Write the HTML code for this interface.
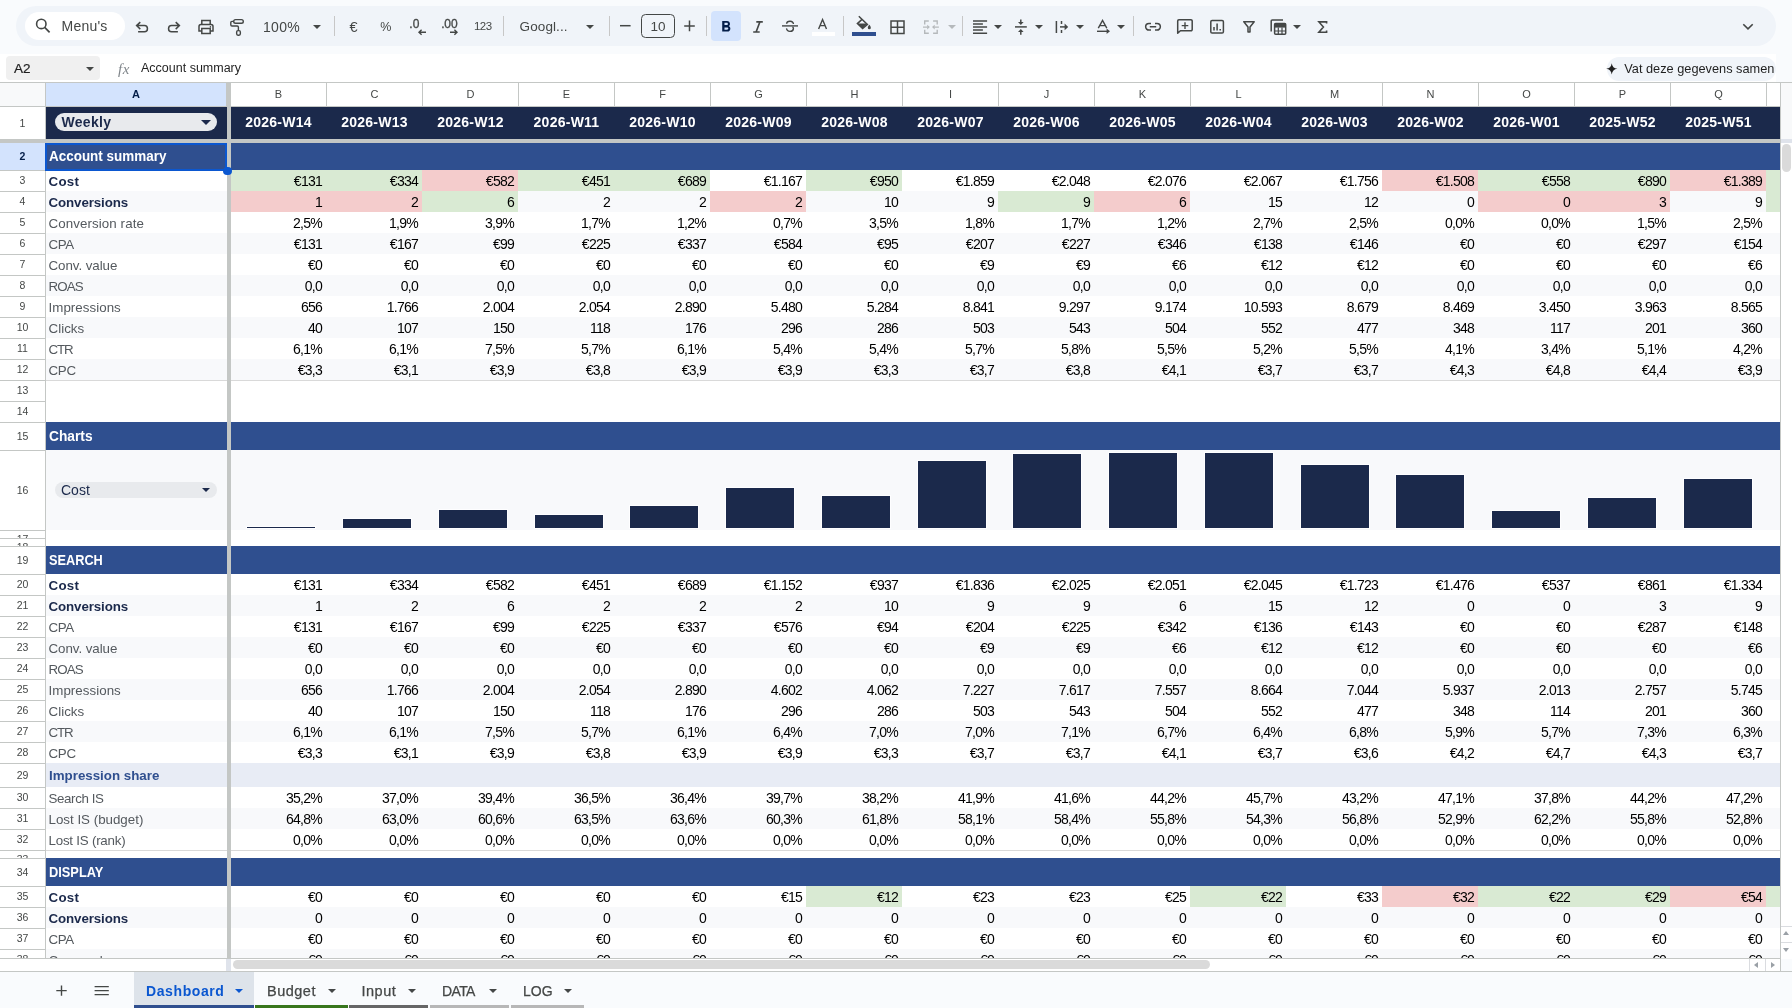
<!DOCTYPE html>
<html lang="nl"><head><meta charset="utf-8"><title>Dashboard</title>
<style>html,body{margin:0;padding:0;}
body{width:1792px;height:1008px;overflow:hidden;background:#f9fbfd;font-family:"Liberation Sans",sans-serif;}
#app{will-change:transform;position:relative;width:1792px;height:1008px;overflow:hidden;background:#f9fbfd;}
#app div{position:absolute;box-sizing:border-box;}
#app svg{position:absolute;overflow:visible;}
#grid{left:0;top:0;width:1792px;height:1008px;}
.t{white-space:nowrap;overflow:visible;font-size:13.33px;color:#000;}
.ch{text-align:center;font-size:11px;color:#444746;}
.chs{font-weight:bold;color:#041e49;}
.rh{overflow:hidden;}
.rh span{position:absolute;left:0;width:45px;height:16px;line-height:16px;text-align:center;font-size:10.5px;color:#444746;}
.rhs span{font-weight:bold;color:#041e49;}
.wk{font-weight:bold;font-size:14px;color:#1b294b;letter-spacing:0.3px;}
.wkh{text-align:center;font-weight:bold;color:#fff;font-size:14px;letter-spacing:0.25px;}
.sec{font-weight:bold;color:#fff;font-size:14.4px;}
.lb{color:#54595e;font-size:13.33px;}
.lb.b{font-weight:bold;color:#1b294b;}
.is{font-weight:bold;color:#2f4f8f;font-size:13.33px;}
.v{text-align:right;color:#000;font-size:14px;letter-spacing:-0.75px;}
.cst{color:#1b294b;font-size:14px;}
.dd{width:0;height:0;border-left:5px solid transparent;border-right:5px solid transparent;border-top:5px solid #444746;}
.sep{width:1px;height:20px;top:16px;background:#c7c7c7;}
.tb{font-size:14px;color:#444746;white-space:nowrap;line-height:20px;height:20px;}
.tab{font-size:14px;color:#444746;white-space:nowrap;line-height:20px;height:20px;font-weight:bold;letter-spacing:0.4px;}
</style></head><body>
<div id="app">
<div style="left:16px;top:6px;width:1760px;height:40px;border-radius:20px;background:#f0f4f9"></div>
<div style="left:25px;top:12px;width:100px;height:28px;border-radius:14px;background:#fff"></div>
<div class="tb" style="left:61.5px;top:16px;font-size:14px;letter-spacing:0.22px;">Menu&#x27;s</div>
<div class="tb" style="left:263px;top:16.5px;font-size:14px;letter-spacing:0.3px;">100%</div>
<div class="sep" style="left:334px"></div>
<div class="tb" style="left:349.6px;top:16.5px;font-size:14.5px;">€</div>
<div class="tb" style="left:380.3px;top:16.5px;font-size:12.5px;">%</div>
<div class="tb" style="left:474px;top:15.5px;font-size:11.5px;letter-spacing:-0.55px;">123</div>
<div class="sep" style="left:503px"></div>
<div class="tb" style="left:519.6px;top:16.5px;font-size:13.5px;letter-spacing:0.1px;">Googl...</div>
<div class="sep" style="left:609px"></div>
<div style="left:641px;top:14px;width:34px;height:24px;border:1px solid #444746;border-radius:4.5px;"></div>
<div class="tb" style="left:641px;top:16.5px;width:34px;text-align:center;font-size:13.5px;">10</div>
<div class="sep" style="left:706px"></div>
<div style="left:711px;top:11px;width:30px;height:30px;border-radius:4px;background:#d3e3fd"></div>
<div style="left:811.5px;top:32px;width:23px;height:3.7px;background:#fff"></div>
<div class="sep" style="left:843px"></div>
<div style="left:852.3px;top:32px;width:23.3px;height:3.7px;background:#2f4f8f"></div>
<div class="sep" style="left:962px"></div>
<div class="sep" style="left:1133px"></div>
<svg style="left:0;top:0" width="1792" height="50" viewBox="0 0 1792 50"><circle cx="41.3" cy="23.9" r="4.7" fill="none" stroke="#444746" stroke-width="1.6"/><path d="M44.7 27.4 L49.6 32.4" fill="none" stroke="#444746" stroke-width="1.7" /><path d="M140.3 22.1 L136.6 25.6 L140.3 29.1 M137 25.6 H144.4 a3.05 3.05 0 0 1 0 6.1 H138.1" fill="none" stroke="#444746" stroke-width="1.5" /><path d="M175.7 22.1 L179.4 25.6 L175.7 29.1 M179 25.6 H171.6 a3.05 3.05 0 0 0 0 6.1 H177.9" fill="none" stroke="#444746" stroke-width="1.5" /><path d="M201.8 24.4 V20.5 H210.2 V24.4" fill="none" stroke="#444746" stroke-width="1.5" /><path d="M201.8 31 H199 V26.5 a2 2 0 0 1 2 -2 H211 a2 2 0 0 1 2 2 V31 H210.2" fill="none" stroke="#444746" stroke-width="1.5" /><path d="M201.8 28.6 H210.2 V33.4 H201.8 Z" fill="none" stroke="#444746" stroke-width="1.5" /><circle cx="210.4" cy="26.9" r="0.8" fill="#444746"/><rect x="233.7" y="19.6" width="9.6" height="3.6" rx="1.8" fill="none" stroke="#444746" stroke-width="1.4"/><path d="M233.7 21.4 H232 a1.2 1.2 0 0 0 -1.2 1.2 V24.8 a1.2 1.2 0 0 0 1.2 1.2 H237.2 a1.2 1.2 0 0 1 1.2 1.2 V30.4" fill="none" stroke="#444746" stroke-width="1.4" /><rect x="236.65" y="30.6" width="3.7" height="4.6" rx="1.35" fill="none" stroke="#444746" stroke-width="1.4"/><path d="M313.0 24.9 h8 l-4.0 4 z" fill="#444746" /><text x="409.3" y="28.1" font-family="Liberation Sans, sans-serif" font-size="12" fill="#444746" stroke="#444746" stroke-width="0.3">.0</text><path d="M426 32.2 H419 M421.6 29.7 L419 32.2 L421.6 34.7" fill="none" stroke="#444746" stroke-width="1.4" /><text x="441.2" y="28.1" font-family="Liberation Sans, sans-serif" font-size="12" fill="#444746" stroke="#444746" stroke-width="0.3" letter-spacing="-0.15">.00</text><path d="M450 32.2 H457 M454.4 29.7 L457 32.2 L454.4 34.7" fill="none" stroke="#444746" stroke-width="1.4" /><path d="M586.0 24.9 h8 l-4.0 4 z" fill="#444746" /><path d="M620 25.7 H630.6" fill="none" stroke="#444746" stroke-width="1.5" /><path d="M684.2 25.9 H694.8 M689.5 20.6 V31.2" fill="none" stroke="#444746" stroke-width="1.5" /><path d="M15.6 10.79c.97-.67 1.65-1.77 1.65-2.79 0-2.26-1.75-4-4-4H7v14h7.04c2.09 0 3.71-1.7 3.71-3.79 0-1.52-.86-2.82-2.15-3.42zM10 6.5h3c.83 0 1.5.67 1.5 1.5s-.67 1.5-1.5 1.5h-3v-3zm3.5 9H10v-3h3.5c.83 0 1.5.67 1.5 1.5s-.67 1.5-1.5 1.5z" fill="#041e49" transform="translate(716.9,17.9) scale(0.7583333333333333) "/><path d="M756.3 21.9 H762.8 M753.2 32 H759.7 M759.9 21.9 L756.1 32" fill="none" stroke="#444746" stroke-width="1.6" /><path d="M782 25.9 H798" fill="none" stroke="#444746" stroke-width="1.4" /><path d="M793.4 24 a3.4 2.6 0 0 0 -6.8 -0.3" fill="none" stroke="#444746" stroke-width="1.4" /><path d="M786.6 28.4 a3.4 2.9 0 0 0 6.8 0.2 c0 -0.9 -0.4 -1.4 -0.9 -1.8" fill="none" stroke="#444746" stroke-width="1.4" /><path d="M818.6 29 L822.55 19.6 L826.5 29 M820 25.6 H825.1" fill="none" stroke="#444746" stroke-width="1.4" /><path d="M858.8 16.2 L867.4 24.4 L862.6 28.6 L857.4 23.6 L862 19.4" fill="none" stroke="#444746" stroke-width="1.5" /><path d="M857.6 23.4 H867.2 L862.6 28.4 Z" fill="#444746" /><path d="M869.3 24.8 c0.9 1.2 1.5 2.1 1.5 2.9 a1.5 1.5 0 0 1 -3 0 c0 -0.8 0.6 -1.7 1.5 -2.9z" fill="#444746" /><path d="M891 21 H904 V33.4 H891 Z M897.5 21 V33.4 M891 27.2 H904" fill="none" stroke="#444746" stroke-width="1.5" /><path d="M928.8 21 H924.7 V24.5 M933.1 21 H937.2 V24.5 M928.8 33.2 H924.7 V29.7 M933.1 33.2 H937.2 V29.7" fill="none" stroke="#b5b9bc" stroke-width="1.4" /><path d="M923 27.1 H927.5 M938.9 27.1 H934.4" fill="none" stroke="#b5b9bc" stroke-width="1.4" /><path d="M927.2 24.7 L929.9 27.1 L927.2 29.5 Z" fill="#b5b9bc" /><path d="M934.7 24.7 L932 27.1 L934.7 29.5 Z" fill="#b5b9bc" /><path d="M948.0 24.9 h8 l-4.0 4 z" fill="#b5b9bc" /><path d="M973 20.9 H987.1 M973 23.95 H982.9 M973 27.05 H987.1 M973 30.1 H982.9 M973 33.2 H987.1" fill="none" stroke="#444746" stroke-width="1.5" /><path d="M994.0 24.9 h8 l-4.0 4 z" fill="#444746" /><path d="M1015 26.9 H1026.8" fill="none" stroke="#444746" stroke-width="1.5" /><path d="M1020.8 19.6 V23" fill="none" stroke="#444746" stroke-width="1.5" /><path d="M1018 22 H1023.6 L1020.8 25 Z" fill="#444746" /><path d="M1020.8 34.8 V31" fill="none" stroke="#444746" stroke-width="1.5" /><path d="M1018 32 H1023.6 L1020.8 29 Z" fill="#444746" /><path d="M1035.0 24.9 h8 l-4.0 4 z" fill="#444746" /><path d="M1056.4 21 V33" fill="none" stroke="#444746" stroke-width="1.5" /><path d="M1060 26.9 H1066" fill="none" stroke="#444746" stroke-width="1.5" /><path d="M1064.6 23.6 L1068.2 26.9 L1064.6 30.2 Z" fill="#444746" /><path d="M1061.5 21 V24 M1061.5 30 V33" fill="none" stroke="#444746" stroke-width="1.5" /><path d="M1076.0 24.9 h8 l-4.0 4 z" fill="#444746" /><path d="M1098.3 28.2 L1102.55 20.4 L1106.8 28.2 M1099.8 25.6 H1105.3" fill="none" stroke="#444746" stroke-width="1.4" /><path d="M1097 31.3 H1108" fill="none" stroke="#444746" stroke-width="1.4" /><path d="M1106.6 28.6 L1110 31.3 L1106.6 34 Z" fill="#444746" /><path d="M1117.0 24.9 h8 l-4.0 4 z" fill="#444746" /><path d="M1151 23.4 H1149 a3.35 3.35 0 0 0 0 6.7 H1151 M1155 23.4 H1157 a3.35 3.35 0 0 1 0 6.7 H1155 M1149.8 26.75 H1156.2" fill="none" stroke="#444746" stroke-width="1.5" /><path d="M1177.7 33.2 V21 a1.2 1.2 0 0 1 1.2 -1.2 H1191 a1.2 1.2 0 0 1 1.2 1.2 V29.5 a1.2 1.2 0 0 1 -1.2 1.2 H1180.4 Z" fill="none" stroke="#444746" stroke-width="1.5" stroke-linejoin="round"/><path d="M1185 22.3 V28.9 M1181.7 25.6 H1188.3" fill="none" stroke="#444746" stroke-width="1.4" /><rect x="1210.8" y="20.4" width="12.6" height="12.6" rx="1.3" fill="none" stroke="#444746" stroke-width="1.5"/><path d="M1214 27 V30.6 M1217.1 23.4 V30.6 M1220.2 29 V30.6" fill="none" stroke="#444746" stroke-width="1.5" /><path d="M1243.8 21.7 H1254.2 L1250 27 V32 H1248 V27 Z" fill="none" stroke="#444746" stroke-width="1.5" stroke-linejoin="round"/><path d="M1283 19.9 H1272.3 a1.1 1.1 0 0 0 -1.1 1.1 V31.4" fill="none" stroke="#444746" stroke-width="1.5" /><rect x="1274.6" y="23.4" width="11.1" height="10.9" rx="1" fill="none" stroke="#444746" stroke-width="1.5"/><path d="M1274.6 23.4 H1285.7 V27.6 H1274.6 Z" fill="#444746" /><path d="M1278.3 27.6 V34.3 M1282 27.6 V34.3 M1274.6 31 H1285.7" fill="none" stroke="#444746" stroke-width="1.2" /><path d="M1293.0 24.9 h8 l-4.0 4 z" fill="#444746" /><path d="M1326.6 23.6 V21.9 H1318.9 L1323.4 27.1 L1318.9 32.2 H1326.6 V30.5" fill="none" stroke="#444746" stroke-width="1.6" stroke-linejoin="miter"/><path d="M1743.3 24.2 L1748 28.9 L1752.7 24.2" fill="none" stroke="#444746" stroke-width="1.6" /></svg>
<div style="left:0;top:54px;width:1776px;height:28px;background:#fff"></div>
<div style="left:6px;top:56px;width:94px;height:24px;border-radius:4px;background:#f0f0f0"></div>
<div class="tb" style="left:14px;top:58.5px;font-size:13.5px;color:#1f1f1f;-webkit-text-stroke:0.2px #1f1f1f;">A2</div>
<div class="dd" style="left:85.5px;top:66.5px;border-left-width:4.5px;border-right-width:4.5px;border-top-width:4.5px;border-top-color:#444746"></div>
<div class="tb" style="left:118px;top:59px;font-size:15px;font-style:italic;color:#80868b;font-family:'Liberation Serif',serif;letter-spacing:0.6px;">fx</div>
<div class="tb" style="left:141px;top:58px;font-size:12.5px;color:#1f1f1f;">Account summary</div>
<div style="left:1607px;top:56.5px;width:169px;height:24px;border-radius:12px;background:#f0f4f9"></div>
<svg style="left:1605.45px;top:61.55px" width="13.5" height="13.5" viewBox="0 0 24 24" fill="#1f1f1f"><path d="M12 2 C12.8 8 16 11.2 22 12 C16 12.8 12.8 16 12 22 C11.2 16 8 12.8 2 12 C8 11.2 11.2 8 12 2z"/></svg>
<div class="tb" style="left:1624.3px;top:58.5px;font-size:12.75px;color:#1f1f1f;">Vat deze gegevens samen</div>
<div id="grid">
<div style="left:0px;top:82px;width:1781px;height:1px;background:#c4c7c5;"></div>
<div style="left:0px;top:83px;width:45px;height:23px;background:#f8f9fa;"></div>
<div style="left:45px;top:83px;width:1px;height:24px;background:#c4c7c5;"></div>
<div style="left:0px;top:106px;width:1780px;height:1px;background:#c4c7c5;"></div>
<div style="left:46px;top:83px;width:180px;height:23px;background:#d3e3fd;"></div>
<div class="t ch chs" style="left:46px;top:83px;width:180px;height:23px;line-height:23px;">A</div>
<div style="left:226px;top:83px;width:1px;height:23px;background:#c4c7c5;"></div>
<div style="left:231px;top:83px;width:95px;height:23px;background:#fff;"></div>
<div class="t ch" style="left:231px;top:83px;width:95px;height:23px;line-height:23px;">B</div>
<div style="left:326px;top:83px;width:1px;height:23px;background:#c4c7c5;"></div>
<div style="left:327px;top:83px;width:95px;height:23px;background:#fff;"></div>
<div class="t ch" style="left:327px;top:83px;width:95px;height:23px;line-height:23px;">C</div>
<div style="left:422px;top:83px;width:1px;height:23px;background:#c4c7c5;"></div>
<div style="left:423px;top:83px;width:95px;height:23px;background:#fff;"></div>
<div class="t ch" style="left:423px;top:83px;width:95px;height:23px;line-height:23px;">D</div>
<div style="left:518px;top:83px;width:1px;height:23px;background:#c4c7c5;"></div>
<div style="left:519px;top:83px;width:95px;height:23px;background:#fff;"></div>
<div class="t ch" style="left:519px;top:83px;width:95px;height:23px;line-height:23px;">E</div>
<div style="left:614px;top:83px;width:1px;height:23px;background:#c4c7c5;"></div>
<div style="left:615px;top:83px;width:95px;height:23px;background:#fff;"></div>
<div class="t ch" style="left:615px;top:83px;width:95px;height:23px;line-height:23px;">F</div>
<div style="left:710px;top:83px;width:1px;height:23px;background:#c4c7c5;"></div>
<div style="left:711px;top:83px;width:95px;height:23px;background:#fff;"></div>
<div class="t ch" style="left:711px;top:83px;width:95px;height:23px;line-height:23px;">G</div>
<div style="left:806px;top:83px;width:1px;height:23px;background:#c4c7c5;"></div>
<div style="left:807px;top:83px;width:95px;height:23px;background:#fff;"></div>
<div class="t ch" style="left:807px;top:83px;width:95px;height:23px;line-height:23px;">H</div>
<div style="left:902px;top:83px;width:1px;height:23px;background:#c4c7c5;"></div>
<div style="left:903px;top:83px;width:95px;height:23px;background:#fff;"></div>
<div class="t ch" style="left:903px;top:83px;width:95px;height:23px;line-height:23px;">I</div>
<div style="left:998px;top:83px;width:1px;height:23px;background:#c4c7c5;"></div>
<div style="left:999px;top:83px;width:95px;height:23px;background:#fff;"></div>
<div class="t ch" style="left:999px;top:83px;width:95px;height:23px;line-height:23px;">J</div>
<div style="left:1094px;top:83px;width:1px;height:23px;background:#c4c7c5;"></div>
<div style="left:1095px;top:83px;width:95px;height:23px;background:#fff;"></div>
<div class="t ch" style="left:1095px;top:83px;width:95px;height:23px;line-height:23px;">K</div>
<div style="left:1190px;top:83px;width:1px;height:23px;background:#c4c7c5;"></div>
<div style="left:1191px;top:83px;width:95px;height:23px;background:#fff;"></div>
<div class="t ch" style="left:1191px;top:83px;width:95px;height:23px;line-height:23px;">L</div>
<div style="left:1286px;top:83px;width:1px;height:23px;background:#c4c7c5;"></div>
<div style="left:1287px;top:83px;width:95px;height:23px;background:#fff;"></div>
<div class="t ch" style="left:1287px;top:83px;width:95px;height:23px;line-height:23px;">M</div>
<div style="left:1382px;top:83px;width:1px;height:23px;background:#c4c7c5;"></div>
<div style="left:1383px;top:83px;width:95px;height:23px;background:#fff;"></div>
<div class="t ch" style="left:1383px;top:83px;width:95px;height:23px;line-height:23px;">N</div>
<div style="left:1478px;top:83px;width:1px;height:23px;background:#c4c7c5;"></div>
<div style="left:1479px;top:83px;width:95px;height:23px;background:#fff;"></div>
<div class="t ch" style="left:1479px;top:83px;width:95px;height:23px;line-height:23px;">O</div>
<div style="left:1574px;top:83px;width:1px;height:23px;background:#c4c7c5;"></div>
<div style="left:1575px;top:83px;width:95px;height:23px;background:#fff;"></div>
<div class="t ch" style="left:1575px;top:83px;width:95px;height:23px;line-height:23px;">P</div>
<div style="left:1670px;top:83px;width:1px;height:23px;background:#c4c7c5;"></div>
<div style="left:1671px;top:83px;width:95px;height:23px;background:#fff;"></div>
<div class="t ch" style="left:1671px;top:83px;width:95px;height:23px;line-height:23px;">Q</div>
<div style="left:1766px;top:83px;width:1px;height:23px;background:#c4c7c5;"></div>
<div style="left:1767px;top:83px;width:13px;height:23px;background:#fff;"></div>
<div style="left:0px;top:107px;width:45px;height:32px;background:#fff;"></div>
<div class="rh" style="left:0;top:107px;width:45px;height:32px;"><span style="top:7.5px">1</span></div>
<div style="left:0px;top:143px;width:45px;height:27px;background:#d3e3fd;"></div>
<div class="rh rhs" style="left:0;top:143px;width:45px;height:27px;"><span style="top:5.0px">2</span></div>
<div style="left:0px;top:170px;width:45px;height:1px;background:#c4c7c5;"></div>
<div style="left:0px;top:171px;width:45px;height:20px;background:#fff;"></div>
<div class="rh" style="left:0;top:171px;width:45px;height:20px;"><span style="top:1px">3</span></div>
<div style="left:0px;top:191px;width:45px;height:1px;background:#c4c7c5;"></div>
<div style="left:0px;top:192px;width:45px;height:20px;background:#fff;"></div>
<div class="rh" style="left:0;top:192px;width:45px;height:20px;"><span style="top:1px">4</span></div>
<div style="left:0px;top:212px;width:45px;height:1px;background:#c4c7c5;"></div>
<div style="left:0px;top:213px;width:45px;height:20px;background:#fff;"></div>
<div class="rh" style="left:0;top:213px;width:45px;height:20px;"><span style="top:1px">5</span></div>
<div style="left:0px;top:233px;width:45px;height:1px;background:#c4c7c5;"></div>
<div style="left:0px;top:234px;width:45px;height:20px;background:#fff;"></div>
<div class="rh" style="left:0;top:234px;width:45px;height:20px;"><span style="top:1px">6</span></div>
<div style="left:0px;top:254px;width:45px;height:1px;background:#c4c7c5;"></div>
<div style="left:0px;top:255px;width:45px;height:20px;background:#fff;"></div>
<div class="rh" style="left:0;top:255px;width:45px;height:20px;"><span style="top:1px">7</span></div>
<div style="left:0px;top:275px;width:45px;height:1px;background:#c4c7c5;"></div>
<div style="left:0px;top:276px;width:45px;height:20px;background:#fff;"></div>
<div class="rh" style="left:0;top:276px;width:45px;height:20px;"><span style="top:1px">8</span></div>
<div style="left:0px;top:296px;width:45px;height:1px;background:#c4c7c5;"></div>
<div style="left:0px;top:297px;width:45px;height:20px;background:#fff;"></div>
<div class="rh" style="left:0;top:297px;width:45px;height:20px;"><span style="top:1px">9</span></div>
<div style="left:0px;top:317px;width:45px;height:1px;background:#c4c7c5;"></div>
<div style="left:0px;top:318px;width:45px;height:20px;background:#fff;"></div>
<div class="rh" style="left:0;top:318px;width:45px;height:20px;"><span style="top:1px">10</span></div>
<div style="left:0px;top:338px;width:45px;height:1px;background:#c4c7c5;"></div>
<div style="left:0px;top:339px;width:45px;height:20px;background:#fff;"></div>
<div class="rh" style="left:0;top:339px;width:45px;height:20px;"><span style="top:1px">11</span></div>
<div style="left:0px;top:359px;width:45px;height:1px;background:#c4c7c5;"></div>
<div style="left:0px;top:360px;width:45px;height:20px;background:#fff;"></div>
<div class="rh" style="left:0;top:360px;width:45px;height:20px;"><span style="top:1px">12</span></div>
<div style="left:0px;top:380px;width:45px;height:1px;background:#c4c7c5;"></div>
<div style="left:0px;top:381px;width:45px;height:20px;background:#fff;"></div>
<div class="rh" style="left:0;top:381px;width:45px;height:20px;"><span style="top:1px">13</span></div>
<div style="left:0px;top:401px;width:45px;height:1px;background:#c4c7c5;"></div>
<div style="left:0px;top:402px;width:45px;height:20px;background:#fff;"></div>
<div class="rh" style="left:0;top:402px;width:45px;height:20px;"><span style="top:1px">14</span></div>
<div style="left:0px;top:422px;width:45px;height:1px;background:#c4c7c5;"></div>
<div style="left:0px;top:423px;width:45px;height:27px;background:#fff;"></div>
<div class="rh" style="left:0;top:423px;width:45px;height:27px;"><span style="top:5.0px">15</span></div>
<div style="left:0px;top:450px;width:45px;height:1px;background:#c4c7c5;"></div>
<div style="left:0px;top:451px;width:45px;height:79px;background:#fff;"></div>
<div class="rh" style="left:0;top:451px;width:45px;height:79px;"><span style="top:31.0px">16</span></div>
<div style="left:0px;top:530px;width:45px;height:1px;background:#c4c7c5;"></div>
<div style="left:0px;top:531px;width:45px;height:7px;background:#fff;"></div>
<div class="rh" style="left:0;top:531px;width:45px;height:7px;"><span style="top:-0.5px">17</span></div>
<div style="left:0px;top:538px;width:45px;height:1px;background:#c4c7c5;"></div>
<div style="left:0px;top:539px;width:45px;height:7px;background:#fff;"></div>
<div class="rh" style="left:0;top:539px;width:45px;height:7px;"><span style="top:-0.5px">18</span></div>
<div style="left:0px;top:546px;width:45px;height:1px;background:#c4c7c5;"></div>
<div style="left:0px;top:547px;width:45px;height:27px;background:#fff;"></div>
<div class="rh" style="left:0;top:547px;width:45px;height:27px;"><span style="top:5.0px">19</span></div>
<div style="left:0px;top:574px;width:45px;height:1px;background:#c4c7c5;"></div>
<div style="left:0px;top:575px;width:45px;height:20px;background:#fff;"></div>
<div class="rh" style="left:0;top:575px;width:45px;height:20px;"><span style="top:1px">20</span></div>
<div style="left:0px;top:595px;width:45px;height:1px;background:#c4c7c5;"></div>
<div style="left:0px;top:596px;width:45px;height:20px;background:#fff;"></div>
<div class="rh" style="left:0;top:596px;width:45px;height:20px;"><span style="top:1px">21</span></div>
<div style="left:0px;top:616px;width:45px;height:1px;background:#c4c7c5;"></div>
<div style="left:0px;top:617px;width:45px;height:20px;background:#fff;"></div>
<div class="rh" style="left:0;top:617px;width:45px;height:20px;"><span style="top:1px">22</span></div>
<div style="left:0px;top:637px;width:45px;height:1px;background:#c4c7c5;"></div>
<div style="left:0px;top:638px;width:45px;height:20px;background:#fff;"></div>
<div class="rh" style="left:0;top:638px;width:45px;height:20px;"><span style="top:1px">23</span></div>
<div style="left:0px;top:658px;width:45px;height:1px;background:#c4c7c5;"></div>
<div style="left:0px;top:659px;width:45px;height:20px;background:#fff;"></div>
<div class="rh" style="left:0;top:659px;width:45px;height:20px;"><span style="top:1px">24</span></div>
<div style="left:0px;top:679px;width:45px;height:1px;background:#c4c7c5;"></div>
<div style="left:0px;top:680px;width:45px;height:20px;background:#fff;"></div>
<div class="rh" style="left:0;top:680px;width:45px;height:20px;"><span style="top:1px">25</span></div>
<div style="left:0px;top:700px;width:45px;height:1px;background:#c4c7c5;"></div>
<div style="left:0px;top:701px;width:45px;height:20px;background:#fff;"></div>
<div class="rh" style="left:0;top:701px;width:45px;height:20px;"><span style="top:1px">26</span></div>
<div style="left:0px;top:721px;width:45px;height:1px;background:#c4c7c5;"></div>
<div style="left:0px;top:722px;width:45px;height:20px;background:#fff;"></div>
<div class="rh" style="left:0;top:722px;width:45px;height:20px;"><span style="top:1px">27</span></div>
<div style="left:0px;top:742px;width:45px;height:1px;background:#c4c7c5;"></div>
<div style="left:0px;top:743px;width:45px;height:20px;background:#fff;"></div>
<div class="rh" style="left:0;top:743px;width:45px;height:20px;"><span style="top:1px">28</span></div>
<div style="left:0px;top:763px;width:45px;height:1px;background:#c4c7c5;"></div>
<div style="left:0px;top:764px;width:45px;height:23px;background:#fff;"></div>
<div class="rh" style="left:0;top:764px;width:45px;height:23px;"><span style="top:3.0px">29</span></div>
<div style="left:0px;top:787px;width:45px;height:1px;background:#c4c7c5;"></div>
<div style="left:0px;top:788px;width:45px;height:20px;background:#fff;"></div>
<div class="rh" style="left:0;top:788px;width:45px;height:20px;"><span style="top:1px">30</span></div>
<div style="left:0px;top:808px;width:45px;height:1px;background:#c4c7c5;"></div>
<div style="left:0px;top:809px;width:45px;height:20px;background:#fff;"></div>
<div class="rh" style="left:0;top:809px;width:45px;height:20px;"><span style="top:1px">31</span></div>
<div style="left:0px;top:829px;width:45px;height:1px;background:#c4c7c5;"></div>
<div style="left:0px;top:830px;width:45px;height:20px;background:#fff;"></div>
<div class="rh" style="left:0;top:830px;width:45px;height:20px;"><span style="top:1px">32</span></div>
<div style="left:0px;top:850px;width:45px;height:1px;background:#c4c7c5;"></div>
<div style="left:0px;top:851px;width:45px;height:7px;background:#fff;"></div>
<div class="rh" style="left:0;top:851px;width:45px;height:7px;"><span style="top:-0.5px">33</span></div>
<div style="left:0px;top:858px;width:45px;height:1px;background:#c4c7c5;"></div>
<div style="left:0px;top:859px;width:45px;height:27px;background:#fff;"></div>
<div class="rh" style="left:0;top:859px;width:45px;height:27px;"><span style="top:5.0px">34</span></div>
<div style="left:0px;top:886px;width:45px;height:1px;background:#c4c7c5;"></div>
<div style="left:0px;top:887px;width:45px;height:20px;background:#fff;"></div>
<div class="rh" style="left:0;top:887px;width:45px;height:20px;"><span style="top:1px">35</span></div>
<div style="left:0px;top:907px;width:45px;height:1px;background:#c4c7c5;"></div>
<div style="left:0px;top:908px;width:45px;height:20px;background:#fff;"></div>
<div class="rh" style="left:0;top:908px;width:45px;height:20px;"><span style="top:1px">36</span></div>
<div style="left:0px;top:928px;width:45px;height:1px;background:#c4c7c5;"></div>
<div style="left:0px;top:929px;width:45px;height:20px;background:#fff;"></div>
<div class="rh" style="left:0;top:929px;width:45px;height:20px;"><span style="top:1px">37</span></div>
<div style="left:0px;top:949px;width:45px;height:1px;background:#c4c7c5;"></div>
<div style="left:0px;top:950px;width:45px;height:8px;background:#fff;"></div>
<div class="rh" style="left:0;top:950px;width:45px;height:8px;"><span style="top:1px">38</span></div>
<div style="left:45px;top:107px;width:1px;height:851px;background:#c4c7c5;"></div>
<div style="left:46px;top:107px;width:1734px;height:851px;background:#fff;"></div>
<div style="left:46px;top:107px;width:181px;height:32px;background:#1b294b;"></div>
<div style="left:231px;top:107px;width:1549px;height:32px;background:#1b294b;"></div>
<div style="left:55px;top:113px;width:162px;height:18px;background:#e8eaed;border-radius:9px;"></div>
<div class="t wk" style="left:61.5px;top:113px;width:80px;height:19px;line-height:19px;">Weekly</div>
<div class="dd" style="left:201px;top:120px;border-top-color:#1b294b"></div>
<div class="t wkh" style="left:231px;top:107px;width:95px;height:31px;line-height:31px;">2026-W14</div>
<div class="t wkh" style="left:327px;top:107px;width:95px;height:31px;line-height:31px;">2026-W13</div>
<div class="t wkh" style="left:423px;top:107px;width:95px;height:31px;line-height:31px;">2026-W12</div>
<div class="t wkh" style="left:519px;top:107px;width:95px;height:31px;line-height:31px;">2026-W11</div>
<div class="t wkh" style="left:615px;top:107px;width:95px;height:31px;line-height:31px;">2026-W10</div>
<div class="t wkh" style="left:711px;top:107px;width:95px;height:31px;line-height:31px;">2026-W09</div>
<div class="t wkh" style="left:807px;top:107px;width:95px;height:31px;line-height:31px;">2026-W08</div>
<div class="t wkh" style="left:903px;top:107px;width:95px;height:31px;line-height:31px;">2026-W07</div>
<div class="t wkh" style="left:999px;top:107px;width:95px;height:31px;line-height:31px;">2026-W06</div>
<div class="t wkh" style="left:1095px;top:107px;width:95px;height:31px;line-height:31px;">2026-W05</div>
<div class="t wkh" style="left:1191px;top:107px;width:95px;height:31px;line-height:31px;">2026-W04</div>
<div class="t wkh" style="left:1287px;top:107px;width:95px;height:31px;line-height:31px;">2026-W03</div>
<div class="t wkh" style="left:1383px;top:107px;width:95px;height:31px;line-height:31px;">2026-W02</div>
<div class="t wkh" style="left:1479px;top:107px;width:95px;height:31px;line-height:31px;">2026-W01</div>
<div class="t wkh" style="left:1575px;top:107px;width:95px;height:31px;line-height:31px;">2025-W52</div>
<div class="t wkh" style="left:1671px;top:107px;width:95px;height:31px;line-height:31px;">2025-W51</div>
<div style="left:46px;top:142px;width:181px;height:28px;background:#2f4f8f;"></div>
<div style="left:231px;top:142px;width:1549px;height:28px;background:#2f4f8f;"></div>
<div class="t sec" style="left:48.5px;top:143px;width:170px;height:27px;line-height:27px;transform:scaleX(0.935);transform-origin:0 50%;">Account summary</div>
<div style="left:46px;top:422px;width:181px;height:28px;background:#2f4f8f;"></div>
<div style="left:231px;top:422px;width:1549px;height:28px;background:#2f4f8f;"></div>
<div class="t sec" style="left:48.5px;top:423px;width:170px;height:27px;line-height:27px;transform:scaleX(0.955);transform-origin:0 50%;">Charts</div>
<div style="left:46px;top:546px;width:181px;height:28px;background:#2f4f8f;"></div>
<div style="left:231px;top:546px;width:1549px;height:28px;background:#2f4f8f;"></div>
<div class="t sec" style="left:48.5px;top:547px;width:170px;height:27px;line-height:27px;transform:scaleX(0.885);transform-origin:0 50%;">SEARCH</div>
<div style="left:46px;top:858px;width:181px;height:28px;background:#2f4f8f;"></div>
<div style="left:231px;top:858px;width:1549px;height:28px;background:#2f4f8f;"></div>
<div class="t sec" style="left:48.5px;top:859px;width:170px;height:27px;line-height:27px;transform:scaleX(0.89);transform-origin:0 50%;">DISPLAY</div>
<div class="t lb b" style="left:48.5px;top:171px;width:175px;height:21px;line-height:21px;letter-spacing:0.26px;">Cost</div>
<div style="left:230px;top:170px;width:96px;height:21px;background:#d9ead3;"></div>
<div class="t v" style="left:230px;top:171px;width:92px;height:21px;line-height:21px;">€131</div>
<div style="left:326px;top:170px;width:96px;height:21px;background:#d9ead3;"></div>
<div class="t v" style="left:326px;top:171px;width:92px;height:21px;line-height:21px;">€334</div>
<div style="left:422px;top:170px;width:96px;height:21px;background:#f4cccc;"></div>
<div class="t v" style="left:422px;top:171px;width:92px;height:21px;line-height:21px;">€582</div>
<div style="left:518px;top:170px;width:96px;height:21px;background:#d9ead3;"></div>
<div class="t v" style="left:518px;top:171px;width:92px;height:21px;line-height:21px;">€451</div>
<div style="left:614px;top:170px;width:96px;height:21px;background:#d9ead3;"></div>
<div class="t v" style="left:614px;top:171px;width:92px;height:21px;line-height:21px;">€689</div>
<div class="t v" style="left:710px;top:171px;width:92px;height:21px;line-height:21px;">€1.167</div>
<div style="left:806px;top:170px;width:96px;height:21px;background:#d9ead3;"></div>
<div class="t v" style="left:806px;top:171px;width:92px;height:21px;line-height:21px;">€950</div>
<div class="t v" style="left:902px;top:171px;width:92px;height:21px;line-height:21px;">€1.859</div>
<div class="t v" style="left:998px;top:171px;width:92px;height:21px;line-height:21px;">€2.048</div>
<div class="t v" style="left:1094px;top:171px;width:92px;height:21px;line-height:21px;">€2.076</div>
<div class="t v" style="left:1190px;top:171px;width:92px;height:21px;line-height:21px;">€2.067</div>
<div class="t v" style="left:1286px;top:171px;width:92px;height:21px;line-height:21px;">€1.756</div>
<div style="left:1382px;top:170px;width:96px;height:21px;background:#f4cccc;"></div>
<div class="t v" style="left:1382px;top:171px;width:92px;height:21px;line-height:21px;">€1.508</div>
<div style="left:1478px;top:170px;width:96px;height:21px;background:#d9ead3;"></div>
<div class="t v" style="left:1478px;top:171px;width:92px;height:21px;line-height:21px;">€558</div>
<div style="left:1574px;top:170px;width:96px;height:21px;background:#d9ead3;"></div>
<div class="t v" style="left:1574px;top:171px;width:92px;height:21px;line-height:21px;">€890</div>
<div style="left:1670px;top:170px;width:96px;height:21px;background:#f4cccc;"></div>
<div class="t v" style="left:1670px;top:171px;width:92px;height:21px;line-height:21px;">€1.389</div>
<div style="left:1766px;top:170px;width:14px;height:21px;background:#d9ead3;"></div>
<div style="left:46px;top:191px;width:181px;height:21px;background:#f8f9fb;"></div>
<div style="left:231px;top:191px;width:1549px;height:21px;background:#f8f9fb;"></div>
<div class="t lb b" style="left:48.5px;top:192px;width:175px;height:21px;line-height:21px;letter-spacing:-0.11px;">Conversions</div>
<div style="left:230px;top:191px;width:96px;height:21px;background:#f4cccc;"></div>
<div class="t v" style="left:230px;top:192px;width:92px;height:21px;line-height:21px;">1</div>
<div style="left:326px;top:191px;width:96px;height:21px;background:#f4cccc;"></div>
<div class="t v" style="left:326px;top:192px;width:92px;height:21px;line-height:21px;">2</div>
<div style="left:422px;top:191px;width:96px;height:21px;background:#d9ead3;"></div>
<div class="t v" style="left:422px;top:192px;width:92px;height:21px;line-height:21px;">6</div>
<div class="t v" style="left:518px;top:192px;width:92px;height:21px;line-height:21px;">2</div>
<div class="t v" style="left:614px;top:192px;width:92px;height:21px;line-height:21px;">2</div>
<div style="left:710px;top:191px;width:96px;height:21px;background:#f4cccc;"></div>
<div class="t v" style="left:710px;top:192px;width:92px;height:21px;line-height:21px;">2</div>
<div class="t v" style="left:806px;top:192px;width:92px;height:21px;line-height:21px;">10</div>
<div class="t v" style="left:902px;top:192px;width:92px;height:21px;line-height:21px;">9</div>
<div style="left:998px;top:191px;width:96px;height:21px;background:#d9ead3;"></div>
<div class="t v" style="left:998px;top:192px;width:92px;height:21px;line-height:21px;">9</div>
<div style="left:1094px;top:191px;width:96px;height:21px;background:#f4cccc;"></div>
<div class="t v" style="left:1094px;top:192px;width:92px;height:21px;line-height:21px;">6</div>
<div class="t v" style="left:1190px;top:192px;width:92px;height:21px;line-height:21px;">15</div>
<div class="t v" style="left:1286px;top:192px;width:92px;height:21px;line-height:21px;">12</div>
<div class="t v" style="left:1382px;top:192px;width:92px;height:21px;line-height:21px;">0</div>
<div style="left:1478px;top:191px;width:96px;height:21px;background:#f4cccc;"></div>
<div class="t v" style="left:1478px;top:192px;width:92px;height:21px;line-height:21px;">0</div>
<div style="left:1574px;top:191px;width:96px;height:21px;background:#f4cccc;"></div>
<div class="t v" style="left:1574px;top:192px;width:92px;height:21px;line-height:21px;">3</div>
<div class="t v" style="left:1670px;top:192px;width:92px;height:21px;line-height:21px;">9</div>
<div style="left:1766px;top:191px;width:14px;height:21px;background:#d9ead3;"></div>
<div class="t lb" style="left:48.5px;top:213px;width:175px;height:21px;line-height:21px;letter-spacing:0.09px;">Conversion rate</div>
<div class="t v" style="left:230px;top:213px;width:92px;height:21px;line-height:21px;">2,5%</div>
<div class="t v" style="left:326px;top:213px;width:92px;height:21px;line-height:21px;">1,9%</div>
<div class="t v" style="left:422px;top:213px;width:92px;height:21px;line-height:21px;">3,9%</div>
<div class="t v" style="left:518px;top:213px;width:92px;height:21px;line-height:21px;">1,7%</div>
<div class="t v" style="left:614px;top:213px;width:92px;height:21px;line-height:21px;">1,2%</div>
<div class="t v" style="left:710px;top:213px;width:92px;height:21px;line-height:21px;">0,7%</div>
<div class="t v" style="left:806px;top:213px;width:92px;height:21px;line-height:21px;">3,5%</div>
<div class="t v" style="left:902px;top:213px;width:92px;height:21px;line-height:21px;">1,8%</div>
<div class="t v" style="left:998px;top:213px;width:92px;height:21px;line-height:21px;">1,7%</div>
<div class="t v" style="left:1094px;top:213px;width:92px;height:21px;line-height:21px;">1,2%</div>
<div class="t v" style="left:1190px;top:213px;width:92px;height:21px;line-height:21px;">2,7%</div>
<div class="t v" style="left:1286px;top:213px;width:92px;height:21px;line-height:21px;">2,5%</div>
<div class="t v" style="left:1382px;top:213px;width:92px;height:21px;line-height:21px;">0,0%</div>
<div class="t v" style="left:1478px;top:213px;width:92px;height:21px;line-height:21px;">0,0%</div>
<div class="t v" style="left:1574px;top:213px;width:92px;height:21px;line-height:21px;">1,5%</div>
<div class="t v" style="left:1670px;top:213px;width:92px;height:21px;line-height:21px;">2,5%</div>
<div style="left:46px;top:233px;width:181px;height:21px;background:#f8f9fb;"></div>
<div style="left:231px;top:233px;width:1549px;height:21px;background:#f8f9fb;"></div>
<div class="t lb" style="left:48.5px;top:234px;width:175px;height:21px;line-height:21px;letter-spacing:-0.41px;">CPA</div>
<div class="t v" style="left:230px;top:234px;width:92px;height:21px;line-height:21px;">€131</div>
<div class="t v" style="left:326px;top:234px;width:92px;height:21px;line-height:21px;">€167</div>
<div class="t v" style="left:422px;top:234px;width:92px;height:21px;line-height:21px;">€99</div>
<div class="t v" style="left:518px;top:234px;width:92px;height:21px;line-height:21px;">€225</div>
<div class="t v" style="left:614px;top:234px;width:92px;height:21px;line-height:21px;">€337</div>
<div class="t v" style="left:710px;top:234px;width:92px;height:21px;line-height:21px;">€584</div>
<div class="t v" style="left:806px;top:234px;width:92px;height:21px;line-height:21px;">€95</div>
<div class="t v" style="left:902px;top:234px;width:92px;height:21px;line-height:21px;">€207</div>
<div class="t v" style="left:998px;top:234px;width:92px;height:21px;line-height:21px;">€227</div>
<div class="t v" style="left:1094px;top:234px;width:92px;height:21px;line-height:21px;">€346</div>
<div class="t v" style="left:1190px;top:234px;width:92px;height:21px;line-height:21px;">€138</div>
<div class="t v" style="left:1286px;top:234px;width:92px;height:21px;line-height:21px;">€146</div>
<div class="t v" style="left:1382px;top:234px;width:92px;height:21px;line-height:21px;">€0</div>
<div class="t v" style="left:1478px;top:234px;width:92px;height:21px;line-height:21px;">€0</div>
<div class="t v" style="left:1574px;top:234px;width:92px;height:21px;line-height:21px;">€297</div>
<div class="t v" style="left:1670px;top:234px;width:92px;height:21px;line-height:21px;">€154</div>
<div class="t lb" style="left:48.5px;top:255px;width:175px;height:21px;line-height:21px;letter-spacing:-0.06px;">Conv. value</div>
<div class="t v" style="left:230px;top:255px;width:92px;height:21px;line-height:21px;">€0</div>
<div class="t v" style="left:326px;top:255px;width:92px;height:21px;line-height:21px;">€0</div>
<div class="t v" style="left:422px;top:255px;width:92px;height:21px;line-height:21px;">€0</div>
<div class="t v" style="left:518px;top:255px;width:92px;height:21px;line-height:21px;">€0</div>
<div class="t v" style="left:614px;top:255px;width:92px;height:21px;line-height:21px;">€0</div>
<div class="t v" style="left:710px;top:255px;width:92px;height:21px;line-height:21px;">€0</div>
<div class="t v" style="left:806px;top:255px;width:92px;height:21px;line-height:21px;">€0</div>
<div class="t v" style="left:902px;top:255px;width:92px;height:21px;line-height:21px;">€9</div>
<div class="t v" style="left:998px;top:255px;width:92px;height:21px;line-height:21px;">€9</div>
<div class="t v" style="left:1094px;top:255px;width:92px;height:21px;line-height:21px;">€6</div>
<div class="t v" style="left:1190px;top:255px;width:92px;height:21px;line-height:21px;">€12</div>
<div class="t v" style="left:1286px;top:255px;width:92px;height:21px;line-height:21px;">€12</div>
<div class="t v" style="left:1382px;top:255px;width:92px;height:21px;line-height:21px;">€0</div>
<div class="t v" style="left:1478px;top:255px;width:92px;height:21px;line-height:21px;">€0</div>
<div class="t v" style="left:1574px;top:255px;width:92px;height:21px;line-height:21px;">€0</div>
<div class="t v" style="left:1670px;top:255px;width:92px;height:21px;line-height:21px;">€6</div>
<div style="left:46px;top:275px;width:181px;height:21px;background:#f8f9fb;"></div>
<div style="left:231px;top:275px;width:1549px;height:21px;background:#f8f9fb;"></div>
<div class="t lb" style="left:48.5px;top:276px;width:175px;height:21px;line-height:21px;letter-spacing:-0.86px;">ROAS</div>
<div class="t v" style="left:230px;top:276px;width:92px;height:21px;line-height:21px;">0,0</div>
<div class="t v" style="left:326px;top:276px;width:92px;height:21px;line-height:21px;">0,0</div>
<div class="t v" style="left:422px;top:276px;width:92px;height:21px;line-height:21px;">0,0</div>
<div class="t v" style="left:518px;top:276px;width:92px;height:21px;line-height:21px;">0,0</div>
<div class="t v" style="left:614px;top:276px;width:92px;height:21px;line-height:21px;">0,0</div>
<div class="t v" style="left:710px;top:276px;width:92px;height:21px;line-height:21px;">0,0</div>
<div class="t v" style="left:806px;top:276px;width:92px;height:21px;line-height:21px;">0,0</div>
<div class="t v" style="left:902px;top:276px;width:92px;height:21px;line-height:21px;">0,0</div>
<div class="t v" style="left:998px;top:276px;width:92px;height:21px;line-height:21px;">0,0</div>
<div class="t v" style="left:1094px;top:276px;width:92px;height:21px;line-height:21px;">0,0</div>
<div class="t v" style="left:1190px;top:276px;width:92px;height:21px;line-height:21px;">0,0</div>
<div class="t v" style="left:1286px;top:276px;width:92px;height:21px;line-height:21px;">0,0</div>
<div class="t v" style="left:1382px;top:276px;width:92px;height:21px;line-height:21px;">0,0</div>
<div class="t v" style="left:1478px;top:276px;width:92px;height:21px;line-height:21px;">0,0</div>
<div class="t v" style="left:1574px;top:276px;width:92px;height:21px;line-height:21px;">0,0</div>
<div class="t v" style="left:1670px;top:276px;width:92px;height:21px;line-height:21px;">0,0</div>
<div class="t lb" style="left:48.5px;top:297px;width:175px;height:21px;line-height:21px;letter-spacing:0.04px;">Impressions</div>
<div class="t v" style="left:230px;top:297px;width:92px;height:21px;line-height:21px;">656</div>
<div class="t v" style="left:326px;top:297px;width:92px;height:21px;line-height:21px;">1.766</div>
<div class="t v" style="left:422px;top:297px;width:92px;height:21px;line-height:21px;">2.004</div>
<div class="t v" style="left:518px;top:297px;width:92px;height:21px;line-height:21px;">2.054</div>
<div class="t v" style="left:614px;top:297px;width:92px;height:21px;line-height:21px;">2.890</div>
<div class="t v" style="left:710px;top:297px;width:92px;height:21px;line-height:21px;">5.480</div>
<div class="t v" style="left:806px;top:297px;width:92px;height:21px;line-height:21px;">5.284</div>
<div class="t v" style="left:902px;top:297px;width:92px;height:21px;line-height:21px;">8.841</div>
<div class="t v" style="left:998px;top:297px;width:92px;height:21px;line-height:21px;">9.297</div>
<div class="t v" style="left:1094px;top:297px;width:92px;height:21px;line-height:21px;">9.174</div>
<div class="t v" style="left:1190px;top:297px;width:92px;height:21px;line-height:21px;">10.593</div>
<div class="t v" style="left:1286px;top:297px;width:92px;height:21px;line-height:21px;">8.679</div>
<div class="t v" style="left:1382px;top:297px;width:92px;height:21px;line-height:21px;">8.469</div>
<div class="t v" style="left:1478px;top:297px;width:92px;height:21px;line-height:21px;">3.450</div>
<div class="t v" style="left:1574px;top:297px;width:92px;height:21px;line-height:21px;">3.963</div>
<div class="t v" style="left:1670px;top:297px;width:92px;height:21px;line-height:21px;">8.565</div>
<div style="left:46px;top:317px;width:181px;height:21px;background:#f8f9fb;"></div>
<div style="left:231px;top:317px;width:1549px;height:21px;background:#f8f9fb;"></div>
<div class="t lb" style="left:48.5px;top:318px;width:175px;height:21px;line-height:21px;letter-spacing:0.03px;">Clicks</div>
<div class="t v" style="left:230px;top:318px;width:92px;height:21px;line-height:21px;">40</div>
<div class="t v" style="left:326px;top:318px;width:92px;height:21px;line-height:21px;">107</div>
<div class="t v" style="left:422px;top:318px;width:92px;height:21px;line-height:21px;">150</div>
<div class="t v" style="left:518px;top:318px;width:92px;height:21px;line-height:21px;">118</div>
<div class="t v" style="left:614px;top:318px;width:92px;height:21px;line-height:21px;">176</div>
<div class="t v" style="left:710px;top:318px;width:92px;height:21px;line-height:21px;">296</div>
<div class="t v" style="left:806px;top:318px;width:92px;height:21px;line-height:21px;">286</div>
<div class="t v" style="left:902px;top:318px;width:92px;height:21px;line-height:21px;">503</div>
<div class="t v" style="left:998px;top:318px;width:92px;height:21px;line-height:21px;">543</div>
<div class="t v" style="left:1094px;top:318px;width:92px;height:21px;line-height:21px;">504</div>
<div class="t v" style="left:1190px;top:318px;width:92px;height:21px;line-height:21px;">552</div>
<div class="t v" style="left:1286px;top:318px;width:92px;height:21px;line-height:21px;">477</div>
<div class="t v" style="left:1382px;top:318px;width:92px;height:21px;line-height:21px;">348</div>
<div class="t v" style="left:1478px;top:318px;width:92px;height:21px;line-height:21px;">117</div>
<div class="t v" style="left:1574px;top:318px;width:92px;height:21px;line-height:21px;">201</div>
<div class="t v" style="left:1670px;top:318px;width:92px;height:21px;line-height:21px;">360</div>
<div class="t lb" style="left:48.5px;top:339px;width:175px;height:21px;line-height:21px;letter-spacing:-1.15px;">CTR</div>
<div class="t v" style="left:230px;top:339px;width:92px;height:21px;line-height:21px;">6,1%</div>
<div class="t v" style="left:326px;top:339px;width:92px;height:21px;line-height:21px;">6,1%</div>
<div class="t v" style="left:422px;top:339px;width:92px;height:21px;line-height:21px;">7,5%</div>
<div class="t v" style="left:518px;top:339px;width:92px;height:21px;line-height:21px;">5,7%</div>
<div class="t v" style="left:614px;top:339px;width:92px;height:21px;line-height:21px;">6,1%</div>
<div class="t v" style="left:710px;top:339px;width:92px;height:21px;line-height:21px;">5,4%</div>
<div class="t v" style="left:806px;top:339px;width:92px;height:21px;line-height:21px;">5,4%</div>
<div class="t v" style="left:902px;top:339px;width:92px;height:21px;line-height:21px;">5,7%</div>
<div class="t v" style="left:998px;top:339px;width:92px;height:21px;line-height:21px;">5,8%</div>
<div class="t v" style="left:1094px;top:339px;width:92px;height:21px;line-height:21px;">5,5%</div>
<div class="t v" style="left:1190px;top:339px;width:92px;height:21px;line-height:21px;">5,2%</div>
<div class="t v" style="left:1286px;top:339px;width:92px;height:21px;line-height:21px;">5,5%</div>
<div class="t v" style="left:1382px;top:339px;width:92px;height:21px;line-height:21px;">4,1%</div>
<div class="t v" style="left:1478px;top:339px;width:92px;height:21px;line-height:21px;">3,4%</div>
<div class="t v" style="left:1574px;top:339px;width:92px;height:21px;line-height:21px;">5,1%</div>
<div class="t v" style="left:1670px;top:339px;width:92px;height:21px;line-height:21px;">4,2%</div>
<div style="left:46px;top:359px;width:181px;height:21px;background:#f8f9fb;"></div>
<div style="left:231px;top:359px;width:1549px;height:21px;background:#f8f9fb;"></div>
<div class="t lb" style="left:48.5px;top:360px;width:175px;height:21px;line-height:21px;letter-spacing:-0.27px;">CPC</div>
<div class="t v" style="left:230px;top:360px;width:92px;height:21px;line-height:21px;">€3,3</div>
<div class="t v" style="left:326px;top:360px;width:92px;height:21px;line-height:21px;">€3,1</div>
<div class="t v" style="left:422px;top:360px;width:92px;height:21px;line-height:21px;">€3,9</div>
<div class="t v" style="left:518px;top:360px;width:92px;height:21px;line-height:21px;">€3,8</div>
<div class="t v" style="left:614px;top:360px;width:92px;height:21px;line-height:21px;">€3,9</div>
<div class="t v" style="left:710px;top:360px;width:92px;height:21px;line-height:21px;">€3,9</div>
<div class="t v" style="left:806px;top:360px;width:92px;height:21px;line-height:21px;">€3,3</div>
<div class="t v" style="left:902px;top:360px;width:92px;height:21px;line-height:21px;">€3,7</div>
<div class="t v" style="left:998px;top:360px;width:92px;height:21px;line-height:21px;">€3,8</div>
<div class="t v" style="left:1094px;top:360px;width:92px;height:21px;line-height:21px;">€4,1</div>
<div class="t v" style="left:1190px;top:360px;width:92px;height:21px;line-height:21px;">€3,7</div>
<div class="t v" style="left:1286px;top:360px;width:92px;height:21px;line-height:21px;">€3,7</div>
<div class="t v" style="left:1382px;top:360px;width:92px;height:21px;line-height:21px;">€4,3</div>
<div class="t v" style="left:1478px;top:360px;width:92px;height:21px;line-height:21px;">€4,8</div>
<div class="t v" style="left:1574px;top:360px;width:92px;height:21px;line-height:21px;">€4,4</div>
<div class="t v" style="left:1670px;top:360px;width:92px;height:21px;line-height:21px;">€3,9</div>
<div class="t lb b" style="left:48.5px;top:575px;width:175px;height:21px;line-height:21px;letter-spacing:0.26px;">Cost</div>
<div class="t v" style="left:230px;top:575px;width:92px;height:21px;line-height:21px;">€131</div>
<div class="t v" style="left:326px;top:575px;width:92px;height:21px;line-height:21px;">€334</div>
<div class="t v" style="left:422px;top:575px;width:92px;height:21px;line-height:21px;">€582</div>
<div class="t v" style="left:518px;top:575px;width:92px;height:21px;line-height:21px;">€451</div>
<div class="t v" style="left:614px;top:575px;width:92px;height:21px;line-height:21px;">€689</div>
<div class="t v" style="left:710px;top:575px;width:92px;height:21px;line-height:21px;">€1.152</div>
<div class="t v" style="left:806px;top:575px;width:92px;height:21px;line-height:21px;">€937</div>
<div class="t v" style="left:902px;top:575px;width:92px;height:21px;line-height:21px;">€1.836</div>
<div class="t v" style="left:998px;top:575px;width:92px;height:21px;line-height:21px;">€2.025</div>
<div class="t v" style="left:1094px;top:575px;width:92px;height:21px;line-height:21px;">€2.051</div>
<div class="t v" style="left:1190px;top:575px;width:92px;height:21px;line-height:21px;">€2.045</div>
<div class="t v" style="left:1286px;top:575px;width:92px;height:21px;line-height:21px;">€1.723</div>
<div class="t v" style="left:1382px;top:575px;width:92px;height:21px;line-height:21px;">€1.476</div>
<div class="t v" style="left:1478px;top:575px;width:92px;height:21px;line-height:21px;">€537</div>
<div class="t v" style="left:1574px;top:575px;width:92px;height:21px;line-height:21px;">€861</div>
<div class="t v" style="left:1670px;top:575px;width:92px;height:21px;line-height:21px;">€1.334</div>
<div style="left:46px;top:595px;width:181px;height:21px;background:#f8f9fb;"></div>
<div style="left:231px;top:595px;width:1549px;height:21px;background:#f8f9fb;"></div>
<div class="t lb b" style="left:48.5px;top:596px;width:175px;height:21px;line-height:21px;letter-spacing:-0.11px;">Conversions</div>
<div class="t v" style="left:230px;top:596px;width:92px;height:21px;line-height:21px;">1</div>
<div class="t v" style="left:326px;top:596px;width:92px;height:21px;line-height:21px;">2</div>
<div class="t v" style="left:422px;top:596px;width:92px;height:21px;line-height:21px;">6</div>
<div class="t v" style="left:518px;top:596px;width:92px;height:21px;line-height:21px;">2</div>
<div class="t v" style="left:614px;top:596px;width:92px;height:21px;line-height:21px;">2</div>
<div class="t v" style="left:710px;top:596px;width:92px;height:21px;line-height:21px;">2</div>
<div class="t v" style="left:806px;top:596px;width:92px;height:21px;line-height:21px;">10</div>
<div class="t v" style="left:902px;top:596px;width:92px;height:21px;line-height:21px;">9</div>
<div class="t v" style="left:998px;top:596px;width:92px;height:21px;line-height:21px;">9</div>
<div class="t v" style="left:1094px;top:596px;width:92px;height:21px;line-height:21px;">6</div>
<div class="t v" style="left:1190px;top:596px;width:92px;height:21px;line-height:21px;">15</div>
<div class="t v" style="left:1286px;top:596px;width:92px;height:21px;line-height:21px;">12</div>
<div class="t v" style="left:1382px;top:596px;width:92px;height:21px;line-height:21px;">0</div>
<div class="t v" style="left:1478px;top:596px;width:92px;height:21px;line-height:21px;">0</div>
<div class="t v" style="left:1574px;top:596px;width:92px;height:21px;line-height:21px;">3</div>
<div class="t v" style="left:1670px;top:596px;width:92px;height:21px;line-height:21px;">9</div>
<div class="t lb" style="left:48.5px;top:617px;width:175px;height:21px;line-height:21px;letter-spacing:-0.41px;">CPA</div>
<div class="t v" style="left:230px;top:617px;width:92px;height:21px;line-height:21px;">€131</div>
<div class="t v" style="left:326px;top:617px;width:92px;height:21px;line-height:21px;">€167</div>
<div class="t v" style="left:422px;top:617px;width:92px;height:21px;line-height:21px;">€99</div>
<div class="t v" style="left:518px;top:617px;width:92px;height:21px;line-height:21px;">€225</div>
<div class="t v" style="left:614px;top:617px;width:92px;height:21px;line-height:21px;">€337</div>
<div class="t v" style="left:710px;top:617px;width:92px;height:21px;line-height:21px;">€576</div>
<div class="t v" style="left:806px;top:617px;width:92px;height:21px;line-height:21px;">€94</div>
<div class="t v" style="left:902px;top:617px;width:92px;height:21px;line-height:21px;">€204</div>
<div class="t v" style="left:998px;top:617px;width:92px;height:21px;line-height:21px;">€225</div>
<div class="t v" style="left:1094px;top:617px;width:92px;height:21px;line-height:21px;">€342</div>
<div class="t v" style="left:1190px;top:617px;width:92px;height:21px;line-height:21px;">€136</div>
<div class="t v" style="left:1286px;top:617px;width:92px;height:21px;line-height:21px;">€143</div>
<div class="t v" style="left:1382px;top:617px;width:92px;height:21px;line-height:21px;">€0</div>
<div class="t v" style="left:1478px;top:617px;width:92px;height:21px;line-height:21px;">€0</div>
<div class="t v" style="left:1574px;top:617px;width:92px;height:21px;line-height:21px;">€287</div>
<div class="t v" style="left:1670px;top:617px;width:92px;height:21px;line-height:21px;">€148</div>
<div style="left:46px;top:637px;width:181px;height:21px;background:#f8f9fb;"></div>
<div style="left:231px;top:637px;width:1549px;height:21px;background:#f8f9fb;"></div>
<div class="t lb" style="left:48.5px;top:638px;width:175px;height:21px;line-height:21px;letter-spacing:-0.06px;">Conv. value</div>
<div class="t v" style="left:230px;top:638px;width:92px;height:21px;line-height:21px;">€0</div>
<div class="t v" style="left:326px;top:638px;width:92px;height:21px;line-height:21px;">€0</div>
<div class="t v" style="left:422px;top:638px;width:92px;height:21px;line-height:21px;">€0</div>
<div class="t v" style="left:518px;top:638px;width:92px;height:21px;line-height:21px;">€0</div>
<div class="t v" style="left:614px;top:638px;width:92px;height:21px;line-height:21px;">€0</div>
<div class="t v" style="left:710px;top:638px;width:92px;height:21px;line-height:21px;">€0</div>
<div class="t v" style="left:806px;top:638px;width:92px;height:21px;line-height:21px;">€0</div>
<div class="t v" style="left:902px;top:638px;width:92px;height:21px;line-height:21px;">€9</div>
<div class="t v" style="left:998px;top:638px;width:92px;height:21px;line-height:21px;">€9</div>
<div class="t v" style="left:1094px;top:638px;width:92px;height:21px;line-height:21px;">€6</div>
<div class="t v" style="left:1190px;top:638px;width:92px;height:21px;line-height:21px;">€12</div>
<div class="t v" style="left:1286px;top:638px;width:92px;height:21px;line-height:21px;">€12</div>
<div class="t v" style="left:1382px;top:638px;width:92px;height:21px;line-height:21px;">€0</div>
<div class="t v" style="left:1478px;top:638px;width:92px;height:21px;line-height:21px;">€0</div>
<div class="t v" style="left:1574px;top:638px;width:92px;height:21px;line-height:21px;">€0</div>
<div class="t v" style="left:1670px;top:638px;width:92px;height:21px;line-height:21px;">€6</div>
<div class="t lb" style="left:48.5px;top:659px;width:175px;height:21px;line-height:21px;letter-spacing:-0.86px;">ROAS</div>
<div class="t v" style="left:230px;top:659px;width:92px;height:21px;line-height:21px;">0,0</div>
<div class="t v" style="left:326px;top:659px;width:92px;height:21px;line-height:21px;">0,0</div>
<div class="t v" style="left:422px;top:659px;width:92px;height:21px;line-height:21px;">0,0</div>
<div class="t v" style="left:518px;top:659px;width:92px;height:21px;line-height:21px;">0,0</div>
<div class="t v" style="left:614px;top:659px;width:92px;height:21px;line-height:21px;">0,0</div>
<div class="t v" style="left:710px;top:659px;width:92px;height:21px;line-height:21px;">0,0</div>
<div class="t v" style="left:806px;top:659px;width:92px;height:21px;line-height:21px;">0,0</div>
<div class="t v" style="left:902px;top:659px;width:92px;height:21px;line-height:21px;">0,0</div>
<div class="t v" style="left:998px;top:659px;width:92px;height:21px;line-height:21px;">0,0</div>
<div class="t v" style="left:1094px;top:659px;width:92px;height:21px;line-height:21px;">0,0</div>
<div class="t v" style="left:1190px;top:659px;width:92px;height:21px;line-height:21px;">0,0</div>
<div class="t v" style="left:1286px;top:659px;width:92px;height:21px;line-height:21px;">0,0</div>
<div class="t v" style="left:1382px;top:659px;width:92px;height:21px;line-height:21px;">0,0</div>
<div class="t v" style="left:1478px;top:659px;width:92px;height:21px;line-height:21px;">0,0</div>
<div class="t v" style="left:1574px;top:659px;width:92px;height:21px;line-height:21px;">0,0</div>
<div class="t v" style="left:1670px;top:659px;width:92px;height:21px;line-height:21px;">0,0</div>
<div style="left:46px;top:679px;width:181px;height:21px;background:#f8f9fb;"></div>
<div style="left:231px;top:679px;width:1549px;height:21px;background:#f8f9fb;"></div>
<div class="t lb" style="left:48.5px;top:680px;width:175px;height:21px;line-height:21px;letter-spacing:0.04px;">Impressions</div>
<div class="t v" style="left:230px;top:680px;width:92px;height:21px;line-height:21px;">656</div>
<div class="t v" style="left:326px;top:680px;width:92px;height:21px;line-height:21px;">1.766</div>
<div class="t v" style="left:422px;top:680px;width:92px;height:21px;line-height:21px;">2.004</div>
<div class="t v" style="left:518px;top:680px;width:92px;height:21px;line-height:21px;">2.054</div>
<div class="t v" style="left:614px;top:680px;width:92px;height:21px;line-height:21px;">2.890</div>
<div class="t v" style="left:710px;top:680px;width:92px;height:21px;line-height:21px;">4.602</div>
<div class="t v" style="left:806px;top:680px;width:92px;height:21px;line-height:21px;">4.062</div>
<div class="t v" style="left:902px;top:680px;width:92px;height:21px;line-height:21px;">7.227</div>
<div class="t v" style="left:998px;top:680px;width:92px;height:21px;line-height:21px;">7.617</div>
<div class="t v" style="left:1094px;top:680px;width:92px;height:21px;line-height:21px;">7.557</div>
<div class="t v" style="left:1190px;top:680px;width:92px;height:21px;line-height:21px;">8.664</div>
<div class="t v" style="left:1286px;top:680px;width:92px;height:21px;line-height:21px;">7.044</div>
<div class="t v" style="left:1382px;top:680px;width:92px;height:21px;line-height:21px;">5.937</div>
<div class="t v" style="left:1478px;top:680px;width:92px;height:21px;line-height:21px;">2.013</div>
<div class="t v" style="left:1574px;top:680px;width:92px;height:21px;line-height:21px;">2.757</div>
<div class="t v" style="left:1670px;top:680px;width:92px;height:21px;line-height:21px;">5.745</div>
<div class="t lb" style="left:48.5px;top:701px;width:175px;height:21px;line-height:21px;letter-spacing:0.03px;">Clicks</div>
<div class="t v" style="left:230px;top:701px;width:92px;height:21px;line-height:21px;">40</div>
<div class="t v" style="left:326px;top:701px;width:92px;height:21px;line-height:21px;">107</div>
<div class="t v" style="left:422px;top:701px;width:92px;height:21px;line-height:21px;">150</div>
<div class="t v" style="left:518px;top:701px;width:92px;height:21px;line-height:21px;">118</div>
<div class="t v" style="left:614px;top:701px;width:92px;height:21px;line-height:21px;">176</div>
<div class="t v" style="left:710px;top:701px;width:92px;height:21px;line-height:21px;">296</div>
<div class="t v" style="left:806px;top:701px;width:92px;height:21px;line-height:21px;">286</div>
<div class="t v" style="left:902px;top:701px;width:92px;height:21px;line-height:21px;">503</div>
<div class="t v" style="left:998px;top:701px;width:92px;height:21px;line-height:21px;">543</div>
<div class="t v" style="left:1094px;top:701px;width:92px;height:21px;line-height:21px;">504</div>
<div class="t v" style="left:1190px;top:701px;width:92px;height:21px;line-height:21px;">552</div>
<div class="t v" style="left:1286px;top:701px;width:92px;height:21px;line-height:21px;">477</div>
<div class="t v" style="left:1382px;top:701px;width:92px;height:21px;line-height:21px;">348</div>
<div class="t v" style="left:1478px;top:701px;width:92px;height:21px;line-height:21px;">114</div>
<div class="t v" style="left:1574px;top:701px;width:92px;height:21px;line-height:21px;">201</div>
<div class="t v" style="left:1670px;top:701px;width:92px;height:21px;line-height:21px;">360</div>
<div style="left:46px;top:721px;width:181px;height:21px;background:#f8f9fb;"></div>
<div style="left:231px;top:721px;width:1549px;height:21px;background:#f8f9fb;"></div>
<div class="t lb" style="left:48.5px;top:722px;width:175px;height:21px;line-height:21px;letter-spacing:-1.15px;">CTR</div>
<div class="t v" style="left:230px;top:722px;width:92px;height:21px;line-height:21px;">6,1%</div>
<div class="t v" style="left:326px;top:722px;width:92px;height:21px;line-height:21px;">6,1%</div>
<div class="t v" style="left:422px;top:722px;width:92px;height:21px;line-height:21px;">7,5%</div>
<div class="t v" style="left:518px;top:722px;width:92px;height:21px;line-height:21px;">5,7%</div>
<div class="t v" style="left:614px;top:722px;width:92px;height:21px;line-height:21px;">6,1%</div>
<div class="t v" style="left:710px;top:722px;width:92px;height:21px;line-height:21px;">6,4%</div>
<div class="t v" style="left:806px;top:722px;width:92px;height:21px;line-height:21px;">7,0%</div>
<div class="t v" style="left:902px;top:722px;width:92px;height:21px;line-height:21px;">7,0%</div>
<div class="t v" style="left:998px;top:722px;width:92px;height:21px;line-height:21px;">7,1%</div>
<div class="t v" style="left:1094px;top:722px;width:92px;height:21px;line-height:21px;">6,7%</div>
<div class="t v" style="left:1190px;top:722px;width:92px;height:21px;line-height:21px;">6,4%</div>
<div class="t v" style="left:1286px;top:722px;width:92px;height:21px;line-height:21px;">6,8%</div>
<div class="t v" style="left:1382px;top:722px;width:92px;height:21px;line-height:21px;">5,9%</div>
<div class="t v" style="left:1478px;top:722px;width:92px;height:21px;line-height:21px;">5,7%</div>
<div class="t v" style="left:1574px;top:722px;width:92px;height:21px;line-height:21px;">7,3%</div>
<div class="t v" style="left:1670px;top:722px;width:92px;height:21px;line-height:21px;">6,3%</div>
<div class="t lb" style="left:48.5px;top:743px;width:175px;height:21px;line-height:21px;letter-spacing:-0.27px;">CPC</div>
<div class="t v" style="left:230px;top:743px;width:92px;height:21px;line-height:21px;">€3,3</div>
<div class="t v" style="left:326px;top:743px;width:92px;height:21px;line-height:21px;">€3,1</div>
<div class="t v" style="left:422px;top:743px;width:92px;height:21px;line-height:21px;">€3,9</div>
<div class="t v" style="left:518px;top:743px;width:92px;height:21px;line-height:21px;">€3,8</div>
<div class="t v" style="left:614px;top:743px;width:92px;height:21px;line-height:21px;">€3,9</div>
<div class="t v" style="left:710px;top:743px;width:92px;height:21px;line-height:21px;">€3,9</div>
<div class="t v" style="left:806px;top:743px;width:92px;height:21px;line-height:21px;">€3,3</div>
<div class="t v" style="left:902px;top:743px;width:92px;height:21px;line-height:21px;">€3,7</div>
<div class="t v" style="left:998px;top:743px;width:92px;height:21px;line-height:21px;">€3,7</div>
<div class="t v" style="left:1094px;top:743px;width:92px;height:21px;line-height:21px;">€4,1</div>
<div class="t v" style="left:1190px;top:743px;width:92px;height:21px;line-height:21px;">€3,7</div>
<div class="t v" style="left:1286px;top:743px;width:92px;height:21px;line-height:21px;">€3,6</div>
<div class="t v" style="left:1382px;top:743px;width:92px;height:21px;line-height:21px;">€4,2</div>
<div class="t v" style="left:1478px;top:743px;width:92px;height:21px;line-height:21px;">€4,7</div>
<div class="t v" style="left:1574px;top:743px;width:92px;height:21px;line-height:21px;">€4,3</div>
<div class="t v" style="left:1670px;top:743px;width:92px;height:21px;line-height:21px;">€3,7</div>
<div class="t lb" style="left:48.5px;top:788px;width:175px;height:21px;line-height:21px;letter-spacing:-0.38px;">Search IS</div>
<div class="t v" style="left:230px;top:788px;width:92px;height:21px;line-height:21px;">35,2%</div>
<div class="t v" style="left:326px;top:788px;width:92px;height:21px;line-height:21px;">37,0%</div>
<div class="t v" style="left:422px;top:788px;width:92px;height:21px;line-height:21px;">39,4%</div>
<div class="t v" style="left:518px;top:788px;width:92px;height:21px;line-height:21px;">36,5%</div>
<div class="t v" style="left:614px;top:788px;width:92px;height:21px;line-height:21px;">36,4%</div>
<div class="t v" style="left:710px;top:788px;width:92px;height:21px;line-height:21px;">39,7%</div>
<div class="t v" style="left:806px;top:788px;width:92px;height:21px;line-height:21px;">38,2%</div>
<div class="t v" style="left:902px;top:788px;width:92px;height:21px;line-height:21px;">41,9%</div>
<div class="t v" style="left:998px;top:788px;width:92px;height:21px;line-height:21px;">41,6%</div>
<div class="t v" style="left:1094px;top:788px;width:92px;height:21px;line-height:21px;">44,2%</div>
<div class="t v" style="left:1190px;top:788px;width:92px;height:21px;line-height:21px;">45,7%</div>
<div class="t v" style="left:1286px;top:788px;width:92px;height:21px;line-height:21px;">43,2%</div>
<div class="t v" style="left:1382px;top:788px;width:92px;height:21px;line-height:21px;">47,1%</div>
<div class="t v" style="left:1478px;top:788px;width:92px;height:21px;line-height:21px;">37,8%</div>
<div class="t v" style="left:1574px;top:788px;width:92px;height:21px;line-height:21px;">44,2%</div>
<div class="t v" style="left:1670px;top:788px;width:92px;height:21px;line-height:21px;">47,2%</div>
<div style="left:46px;top:808px;width:181px;height:21px;background:#f8f9fb;"></div>
<div style="left:231px;top:808px;width:1549px;height:21px;background:#f8f9fb;"></div>
<div class="t lb" style="left:48.5px;top:809px;width:175px;height:21px;line-height:21px;letter-spacing:-0.00px;">Lost IS (budget)</div>
<div class="t v" style="left:230px;top:809px;width:92px;height:21px;line-height:21px;">64,8%</div>
<div class="t v" style="left:326px;top:809px;width:92px;height:21px;line-height:21px;">63,0%</div>
<div class="t v" style="left:422px;top:809px;width:92px;height:21px;line-height:21px;">60,6%</div>
<div class="t v" style="left:518px;top:809px;width:92px;height:21px;line-height:21px;">63,5%</div>
<div class="t v" style="left:614px;top:809px;width:92px;height:21px;line-height:21px;">63,6%</div>
<div class="t v" style="left:710px;top:809px;width:92px;height:21px;line-height:21px;">60,3%</div>
<div class="t v" style="left:806px;top:809px;width:92px;height:21px;line-height:21px;">61,8%</div>
<div class="t v" style="left:902px;top:809px;width:92px;height:21px;line-height:21px;">58,1%</div>
<div class="t v" style="left:998px;top:809px;width:92px;height:21px;line-height:21px;">58,4%</div>
<div class="t v" style="left:1094px;top:809px;width:92px;height:21px;line-height:21px;">55,8%</div>
<div class="t v" style="left:1190px;top:809px;width:92px;height:21px;line-height:21px;">54,3%</div>
<div class="t v" style="left:1286px;top:809px;width:92px;height:21px;line-height:21px;">56,8%</div>
<div class="t v" style="left:1382px;top:809px;width:92px;height:21px;line-height:21px;">52,9%</div>
<div class="t v" style="left:1478px;top:809px;width:92px;height:21px;line-height:21px;">62,2%</div>
<div class="t v" style="left:1574px;top:809px;width:92px;height:21px;line-height:21px;">55,8%</div>
<div class="t v" style="left:1670px;top:809px;width:92px;height:21px;line-height:21px;">52,8%</div>
<div class="t lb" style="left:48.5px;top:830px;width:175px;height:21px;line-height:21px;letter-spacing:-0.22px;">Lost IS (rank)</div>
<div class="t v" style="left:230px;top:830px;width:92px;height:21px;line-height:21px;">0,0%</div>
<div class="t v" style="left:326px;top:830px;width:92px;height:21px;line-height:21px;">0,0%</div>
<div class="t v" style="left:422px;top:830px;width:92px;height:21px;line-height:21px;">0,0%</div>
<div class="t v" style="left:518px;top:830px;width:92px;height:21px;line-height:21px;">0,0%</div>
<div class="t v" style="left:614px;top:830px;width:92px;height:21px;line-height:21px;">0,0%</div>
<div class="t v" style="left:710px;top:830px;width:92px;height:21px;line-height:21px;">0,0%</div>
<div class="t v" style="left:806px;top:830px;width:92px;height:21px;line-height:21px;">0,0%</div>
<div class="t v" style="left:902px;top:830px;width:92px;height:21px;line-height:21px;">0,0%</div>
<div class="t v" style="left:998px;top:830px;width:92px;height:21px;line-height:21px;">0,0%</div>
<div class="t v" style="left:1094px;top:830px;width:92px;height:21px;line-height:21px;">0,0%</div>
<div class="t v" style="left:1190px;top:830px;width:92px;height:21px;line-height:21px;">0,0%</div>
<div class="t v" style="left:1286px;top:830px;width:92px;height:21px;line-height:21px;">0,0%</div>
<div class="t v" style="left:1382px;top:830px;width:92px;height:21px;line-height:21px;">0,0%</div>
<div class="t v" style="left:1478px;top:830px;width:92px;height:21px;line-height:21px;">0,0%</div>
<div class="t v" style="left:1574px;top:830px;width:92px;height:21px;line-height:21px;">0,0%</div>
<div class="t v" style="left:1670px;top:830px;width:92px;height:21px;line-height:21px;">0,0%</div>
<div class="t lb b" style="left:48.5px;top:887px;width:175px;height:21px;line-height:21px;letter-spacing:0.26px;">Cost</div>
<div class="t v" style="left:230px;top:887px;width:92px;height:21px;line-height:21px;">€0</div>
<div class="t v" style="left:326px;top:887px;width:92px;height:21px;line-height:21px;">€0</div>
<div class="t v" style="left:422px;top:887px;width:92px;height:21px;line-height:21px;">€0</div>
<div class="t v" style="left:518px;top:887px;width:92px;height:21px;line-height:21px;">€0</div>
<div class="t v" style="left:614px;top:887px;width:92px;height:21px;line-height:21px;">€0</div>
<div class="t v" style="left:710px;top:887px;width:92px;height:21px;line-height:21px;">€15</div>
<div style="left:806px;top:886px;width:96px;height:21px;background:#d9ead3;"></div>
<div class="t v" style="left:806px;top:887px;width:92px;height:21px;line-height:21px;">€12</div>
<div class="t v" style="left:902px;top:887px;width:92px;height:21px;line-height:21px;">€23</div>
<div class="t v" style="left:998px;top:887px;width:92px;height:21px;line-height:21px;">€23</div>
<div class="t v" style="left:1094px;top:887px;width:92px;height:21px;line-height:21px;">€25</div>
<div style="left:1190px;top:886px;width:96px;height:21px;background:#d9ead3;"></div>
<div class="t v" style="left:1190px;top:887px;width:92px;height:21px;line-height:21px;">€22</div>
<div class="t v" style="left:1286px;top:887px;width:92px;height:21px;line-height:21px;">€33</div>
<div style="left:1382px;top:886px;width:96px;height:21px;background:#f4cccc;"></div>
<div class="t v" style="left:1382px;top:887px;width:92px;height:21px;line-height:21px;">€32</div>
<div style="left:1478px;top:886px;width:96px;height:21px;background:#d9ead3;"></div>
<div class="t v" style="left:1478px;top:887px;width:92px;height:21px;line-height:21px;">€22</div>
<div style="left:1574px;top:886px;width:96px;height:21px;background:#d9ead3;"></div>
<div class="t v" style="left:1574px;top:887px;width:92px;height:21px;line-height:21px;">€29</div>
<div style="left:1670px;top:886px;width:96px;height:21px;background:#f4cccc;"></div>
<div class="t v" style="left:1670px;top:887px;width:92px;height:21px;line-height:21px;">€54</div>
<div style="left:1766px;top:886px;width:14px;height:21px;background:#d9ead3;"></div>
<div style="left:46px;top:907px;width:181px;height:21px;background:#f8f9fb;"></div>
<div style="left:231px;top:907px;width:1549px;height:21px;background:#f8f9fb;"></div>
<div class="t lb b" style="left:48.5px;top:908px;width:175px;height:21px;line-height:21px;letter-spacing:-0.11px;">Conversions</div>
<div class="t v" style="left:230px;top:908px;width:92px;height:21px;line-height:21px;">0</div>
<div class="t v" style="left:326px;top:908px;width:92px;height:21px;line-height:21px;">0</div>
<div class="t v" style="left:422px;top:908px;width:92px;height:21px;line-height:21px;">0</div>
<div class="t v" style="left:518px;top:908px;width:92px;height:21px;line-height:21px;">0</div>
<div class="t v" style="left:614px;top:908px;width:92px;height:21px;line-height:21px;">0</div>
<div class="t v" style="left:710px;top:908px;width:92px;height:21px;line-height:21px;">0</div>
<div class="t v" style="left:806px;top:908px;width:92px;height:21px;line-height:21px;">0</div>
<div class="t v" style="left:902px;top:908px;width:92px;height:21px;line-height:21px;">0</div>
<div class="t v" style="left:998px;top:908px;width:92px;height:21px;line-height:21px;">0</div>
<div class="t v" style="left:1094px;top:908px;width:92px;height:21px;line-height:21px;">0</div>
<div class="t v" style="left:1190px;top:908px;width:92px;height:21px;line-height:21px;">0</div>
<div class="t v" style="left:1286px;top:908px;width:92px;height:21px;line-height:21px;">0</div>
<div class="t v" style="left:1382px;top:908px;width:92px;height:21px;line-height:21px;">0</div>
<div class="t v" style="left:1478px;top:908px;width:92px;height:21px;line-height:21px;">0</div>
<div class="t v" style="left:1574px;top:908px;width:92px;height:21px;line-height:21px;">0</div>
<div class="t v" style="left:1670px;top:908px;width:92px;height:21px;line-height:21px;">0</div>
<div class="t lb" style="left:48.5px;top:929px;width:175px;height:21px;line-height:21px;letter-spacing:-0.41px;">CPA</div>
<div class="t v" style="left:230px;top:929px;width:92px;height:21px;line-height:21px;">€0</div>
<div class="t v" style="left:326px;top:929px;width:92px;height:21px;line-height:21px;">€0</div>
<div class="t v" style="left:422px;top:929px;width:92px;height:21px;line-height:21px;">€0</div>
<div class="t v" style="left:518px;top:929px;width:92px;height:21px;line-height:21px;">€0</div>
<div class="t v" style="left:614px;top:929px;width:92px;height:21px;line-height:21px;">€0</div>
<div class="t v" style="left:710px;top:929px;width:92px;height:21px;line-height:21px;">€0</div>
<div class="t v" style="left:806px;top:929px;width:92px;height:21px;line-height:21px;">€0</div>
<div class="t v" style="left:902px;top:929px;width:92px;height:21px;line-height:21px;">€0</div>
<div class="t v" style="left:998px;top:929px;width:92px;height:21px;line-height:21px;">€0</div>
<div class="t v" style="left:1094px;top:929px;width:92px;height:21px;line-height:21px;">€0</div>
<div class="t v" style="left:1190px;top:929px;width:92px;height:21px;line-height:21px;">€0</div>
<div class="t v" style="left:1286px;top:929px;width:92px;height:21px;line-height:21px;">€0</div>
<div class="t v" style="left:1382px;top:929px;width:92px;height:21px;line-height:21px;">€0</div>
<div class="t v" style="left:1478px;top:929px;width:92px;height:21px;line-height:21px;">€0</div>
<div class="t v" style="left:1574px;top:929px;width:92px;height:21px;line-height:21px;">€0</div>
<div class="t v" style="left:1670px;top:929px;width:92px;height:21px;line-height:21px;">€0</div>
<div style="left:46px;top:949px;width:181px;height:21px;background:#f8f9fb;"></div>
<div style="left:231px;top:949px;width:1549px;height:21px;background:#f8f9fb;"></div>
<div class="t lb" style="left:48.5px;top:950px;width:175px;height:21px;line-height:21px;letter-spacing:-0.06px;">Conv. value</div>
<div class="t v" style="left:230px;top:950px;width:92px;height:21px;line-height:21px;">€0</div>
<div class="t v" style="left:326px;top:950px;width:92px;height:21px;line-height:21px;">€0</div>
<div class="t v" style="left:422px;top:950px;width:92px;height:21px;line-height:21px;">€0</div>
<div class="t v" style="left:518px;top:950px;width:92px;height:21px;line-height:21px;">€0</div>
<div class="t v" style="left:614px;top:950px;width:92px;height:21px;line-height:21px;">€0</div>
<div class="t v" style="left:710px;top:950px;width:92px;height:21px;line-height:21px;">€0</div>
<div class="t v" style="left:806px;top:950px;width:92px;height:21px;line-height:21px;">€0</div>
<div class="t v" style="left:902px;top:950px;width:92px;height:21px;line-height:21px;">€0</div>
<div class="t v" style="left:998px;top:950px;width:92px;height:21px;line-height:21px;">€0</div>
<div class="t v" style="left:1094px;top:950px;width:92px;height:21px;line-height:21px;">€0</div>
<div class="t v" style="left:1190px;top:950px;width:92px;height:21px;line-height:21px;">€0</div>
<div class="t v" style="left:1286px;top:950px;width:92px;height:21px;line-height:21px;">€0</div>
<div class="t v" style="left:1382px;top:950px;width:92px;height:21px;line-height:21px;">€0</div>
<div class="t v" style="left:1478px;top:950px;width:92px;height:21px;line-height:21px;">€0</div>
<div class="t v" style="left:1574px;top:950px;width:92px;height:21px;line-height:21px;">€0</div>
<div class="t v" style="left:1670px;top:950px;width:92px;height:21px;line-height:21px;">€0</div>
<div style="left:46px;top:763px;width:181px;height:24px;background:#e8ecf5;"></div>
<div style="left:231px;top:763px;width:1549px;height:24px;background:#e8ecf5;"></div>
<div class="t is" style="left:49px;top:764px;width:170px;height:23px;line-height:23px;">Impression share</div>
<div style="left:46px;top:380px;width:1734px;height:1px;background:#d9d9d9;"></div>
<div style="left:46px;top:850px;width:1734px;height:1px;background:#d9d9d9;"></div>
<div style="left:46px;top:450px;width:181px;height:80px;background:#f8f9fb;"></div>
<div style="left:231px;top:450px;width:1549px;height:80px;background:#f8f9fb;"></div>
<div style="left:55px;top:482px;width:162px;height:16px;background:#e8eaed;border-radius:8px;"></div>
<div class="t cst" style="left:61px;top:481px;width:80px;height:19px;line-height:19px;">Cost</div>
<div class="dd" style="left:201.5px;top:488px;border-left-width:4.25px;border-right-width:4.25px;border-top-width:4.5px;border-top-color:#1b294b"></div>
<div style="left:247px;top:527px;width:68px;height:1px;background:#1b294b;outline:1px solid rgba(255,255,255,0.85);"></div>
<div style="left:343px;top:519px;width:68px;height:9px;background:#1b294b;outline:1px solid rgba(255,255,255,0.85);"></div>
<div style="left:439px;top:510px;width:68px;height:18px;background:#1b294b;outline:1px solid rgba(255,255,255,0.85);"></div>
<div style="left:535px;top:515px;width:68px;height:13px;background:#1b294b;outline:1px solid rgba(255,255,255,0.85);"></div>
<div style="left:630px;top:506px;width:68px;height:22px;background:#1b294b;outline:1px solid rgba(255,255,255,0.85);"></div>
<div style="left:726px;top:488px;width:68px;height:40px;background:#1b294b;outline:1px solid rgba(255,255,255,0.85);"></div>
<div style="left:822px;top:496px;width:68px;height:32px;background:#1b294b;outline:1px solid rgba(255,255,255,0.85);"></div>
<div style="left:918px;top:461px;width:68px;height:67px;background:#1b294b;outline:1px solid rgba(255,255,255,0.85);"></div>
<div style="left:1013px;top:454px;width:68px;height:74px;background:#1b294b;outline:1px solid rgba(255,255,255,0.85);"></div>
<div style="left:1109px;top:453px;width:68px;height:75px;background:#1b294b;outline:1px solid rgba(255,255,255,0.85);"></div>
<div style="left:1205px;top:453px;width:68px;height:75px;background:#1b294b;outline:1px solid rgba(255,255,255,0.85);"></div>
<div style="left:1301px;top:465px;width:68px;height:63px;background:#1b294b;outline:1px solid rgba(255,255,255,0.85);"></div>
<div style="left:1396px;top:475px;width:68px;height:53px;background:#1b294b;outline:1px solid rgba(255,255,255,0.85);"></div>
<div style="left:1492px;top:511px;width:68px;height:17px;background:#1b294b;outline:1px solid rgba(255,255,255,0.85);"></div>
<div style="left:1588px;top:498px;width:68px;height:30px;background:#1b294b;outline:1px solid rgba(255,255,255,0.85);"></div>
<div style="left:1684px;top:479px;width:68px;height:49px;background:#1b294b;outline:1px solid rgba(255,255,255,0.85);"></div>
<div style="left:226px;top:83px;width:5px;height:24px;background:#c4c7c5;"></div>
<div style="left:227px;top:107px;width:4px;height:851px;background:#c4c7c5;"></div>
<div style="left:0px;top:139px;width:1780px;height:4px;background:#c4c7c5;"></div>
<div style="left:45px;top:143px;width:182px;height:28px;border:2px solid #0b57d0;background:transparent"></div>
<div style="left:223px;top:166.5px;width:8.5px;height:8.5px;border-radius:50%;background:#0b57d0"></div>
<div style="left:0;top:958px;width:1792px;height:50px;background:#f9fbfd"></div>
<div style="left:0;top:958px;width:1781px;height:1px;background:#c4c7c5"></div>
<div style="left:0;top:959px;width:1781px;height:12px;background:#fff"></div>
<div style="left:226px;top:959px;width:5px;height:12px;background:#dfe3eb"></div>
<div style="left:233px;top:960px;width:977px;height:9px;border-radius:4.5px;background:#dadada"></div>
<div style="left:1749px;top:959px;width:1px;height:12px;background:#dadce0"></div>
<div style="left:1765px;top:959px;width:1px;height:12px;background:#dadce0"></div>
<div style="left:1780px;top:959px;width:1px;height:12px;background:#c4c7c5"></div>
<div style="left:1754px;top:961.5px;width:0;height:0;border-top:3.5px solid transparent;border-bottom:3.5px solid transparent;border-right:4px solid #9aa0a6"></div>
<div style="left:1771px;top:961.5px;width:0;height:0;border-top:3.5px solid transparent;border-bottom:3.5px solid transparent;border-left:4px solid #9aa0a6"></div>
<div style="left:0;top:971px;width:1792px;height:1px;background:#c4c7c5"></div>
<div style="left:1781px;top:83px;width:11px;height:876px;background:#fff"></div>
<div style="left:1781px;top:83px;width:11px;height:56px;background:#f8f9fa"></div>
<div style="left:1781px;top:82px;width:11px;height:1px;background:#c4c7c5"></div>
<div style="left:1780px;top:83px;width:1px;height:876px;background:#c4c7c5"></div>
<div style="left:1781px;top:139px;width:11px;height:4px;background:#dfe3eb"></div>
<div style="left:1782px;top:144px;width:9px;height:28px;border-radius:4.5px;background:#dadada"></div>
<div style="left:1781px;top:926px;width:11px;height:1px;background:#dadce0"></div>
<div style="left:1781px;top:942px;width:11px;height:1px;background:#dadce0"></div>
<div style="left:1783px;top:931px;width:0;height:0;border-left:3.5px solid transparent;border-right:3.5px solid transparent;border-bottom:4px solid #9aa0a6"></div>
<div style="left:1783px;top:948px;width:0;height:0;border-left:3.5px solid transparent;border-right:3.5px solid transparent;border-top:4px solid #9aa0a6"></div>
<svg style="left:0;top:972px" width="140" height="36" viewBox="0 972 140 36"><path d="M56.3 990.6 H66.7 M61.5 985.4 V995.8" stroke="#444746" stroke-width="1.4" fill="none"/><path d="M94.6 986.6 H108.8 M94.6 990.6 H108.8 M94.6 994.6 H108.8" stroke="#444746" stroke-width="1.4" fill="none"/></svg>
<div style="left:134px;top:972px;width:120px;height:36px;background:#dde3ea"></div>
<div style="left:134px;top:1005px;width:120px;height:3px;background:#2f4f8f"></div>
<div class="tab" style="left:146px;top:981px;color:#0b57d0;letter-spacing:0.6px;">Dashboard</div>
<div class="dd" style="left:234.5px;top:989px;border-left-width:4.5px;border-right-width:4.5px;border-top-width:4.5px;border-top-color:#0b57d0"></div>
<div class="tab" style="left:267px;top:981px;font-weight:normal;-webkit-text-stroke:0.25px #444746;font-size:14.5px;letter-spacing:0.5px;">Budget</div>
<div class="dd" style="left:327.5px;top:989px;border-left-width:4.5px;border-right-width:4.5px;border-top-width:4.5px;"></div>
<div style="left:255px;top:1005px;width:93px;height:3px;background:#38761d"></div>
<div class="tab" style="left:361.5px;top:981px;font-weight:normal;-webkit-text-stroke:0.25px #444746;font-size:14.5px;letter-spacing:0.5px;">Input</div>
<div class="dd" style="left:408.0px;top:989px;border-left-width:4.5px;border-right-width:4.5px;border-top-width:4.5px;"></div>
<div style="left:349px;top:1005px;width:79px;height:3px;background:#666666"></div>
<div class="tab" style="left:442px;top:981px;font-weight:normal;-webkit-text-stroke:0.25px #444746;font-size:14px;letter-spacing:-0.6px;">DATA</div>
<div class="dd" style="left:488.5px;top:989px;border-left-width:4.5px;border-right-width:4.5px;border-top-width:4.5px;"></div>
<div style="left:430px;top:1005px;width:79px;height:3px;background:#b7b7b7"></div>
<div class="tab" style="left:523px;top:981px;font-weight:normal;-webkit-text-stroke:0.25px #444746;font-size:14px;letter-spacing:0;">LOG</div>
<div class="dd" style="left:563.5px;top:989px;border-left-width:4.5px;border-right-width:4.5px;border-top-width:4.5px;"></div>
<div style="left:511px;top:1005px;width:73px;height:3px;background:#b7b7b7"></div>
</div>
</div></body></html>
